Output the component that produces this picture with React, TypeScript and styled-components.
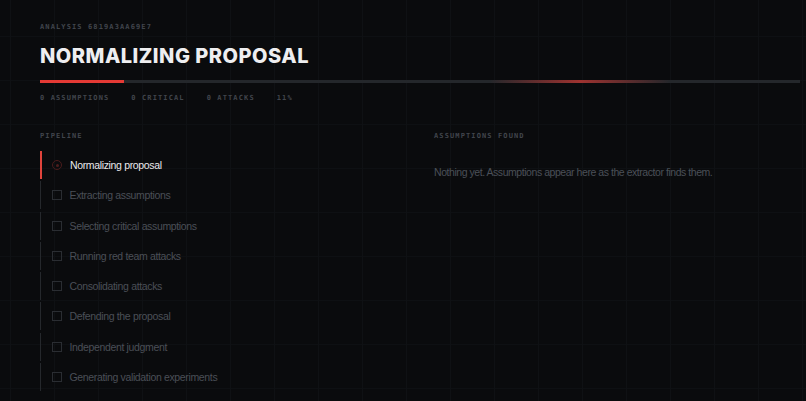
import { FC } from "react";
import styled, { createGlobalStyle } from "styled-components";

const GlobalStyle = createGlobalStyle`
  html, body {
    margin: 0;
    padding: 0;
    background: #0a0b0d;
  }
  body {
    font-family: "Liberation Sans", Arial, sans-serif;
  }
`;

const Page = styled.div`
  min-height: 401px;
  box-sizing: border-box;
  padding: 22px 6px 0 40px;
  background-color: #0a0b0d;
  background-image:
    linear-gradient(to right, #0f1114 1px, transparent 1px),
    linear-gradient(to bottom, #0e1013 1px, transparent 1px);
  background-size: 44px 44px;
  background-position: 10px 36px;
`;

const Mono = styled.div<{ $color?: string }>`
  font-family: "DejaVu Sans Mono", "Liberation Mono", monospace;
  font-size: 7px;
  font-weight: 700;
  line-height: 10px;
  letter-spacing: 1.12px;
  text-transform: uppercase;
  color: ${(p) => p.$color ?? "#41454c"};
`;

const Title = styled.h1`
  margin: 12px 0 0;
  font-family: Inter, "Liberation Sans", sans-serif;
  font-weight: 800;
  font-size: 20px;
  line-height: 24px;
  letter-spacing: 0.5px;
  color: #eeeef0;
`;

const Track = styled.div`
  position: relative;
  margin-top: 12px;
  height: 3px;
  width: 760px;
  background: #24272b;
  overflow: hidden;
`;

const Fill = styled.div`
  height: 100%;
  background: #e53a35;
`;

const Shimmer = styled.div`
  position: absolute;
  top: 0;
  left: 450px;
  width: 180px;
  height: 100%;
  background: linear-gradient(
    to right,
    rgba(200, 55, 50, 0) 0%,
    rgba(200, 55, 50, 0.75) 50%,
    rgba(200, 55, 50, 0) 100%
  );
`;

const Stats = styled.div`
  display: flex;
  gap: 22px;
  margin-top: 10px;
`;

const Columns = styled.div`
  display: grid;
  grid-template-columns: 366px 1fr;
  column-gap: 28px;
  margin-top: 28px;
`;

const Steps = styled.ul`
  list-style: none;
  margin: 10px 0 0;
  padding: 0;
  display: flex;
  flex-direction: column;
  gap: 2.3px;
`;

const Step = styled.li<{ $active?: boolean }>`
  display: flex;
  align-items: center;
  gap: 8px;
  height: 28px;
  padding-left: ${(p) => (p.$active ? "10px" : "10.5px")};
  border-left: ${(p) => (p.$active ? "2px solid #e0443c" : "1.5px solid #25282c")};
  font-size: 10.5px;
  letter-spacing: -0.35px;
  color: ${(p) => (p.$active ? "#e9e9ec" : "#4a4f57")};
`;

const Box = styled.span`
  width: 8px;
  height: 8px;
  border: 1px solid #2a2d32;
  flex: none;
`;

const Ring = styled.span`
  width: 8px;
  height: 8px;
  border: 1px solid #4a1c1c;
  border-radius: 50%;
  display: flex;
  align-items: center;
  justify-content: center;
  flex: none;

  &::after {
    content: "";
    width: 3px;
    height: 3px;
    border-radius: 50%;
    background: #4d1d1d;
  }
`;

const Empty = styled.p`
  margin: 25px 0 0;
  font-size: 10.5px;
  letter-spacing: -0.45px;
  color: #4b5058;
`;

const steps = [
  "Normalizing proposal",
  "Extracting assumptions",
  "Selecting critical assumptions",
  "Running red team attacks",
  "Consolidating attacks",
  "Defending the proposal",
  "Independent judgment",
  "Generating validation experiments",
];

const progress = 11;

const App: FC = () => {
  return (
    <Page>
      <GlobalStyle />
      <Mono>Analysis 6819A3AA69E7</Mono>
      <Title>NORMALIZING PROPOSAL</Title>
      <Track>
        <Fill style={{ width: `${progress}%` }} />
        <Shimmer />
      </Track>
      <Stats>
        <Mono>0 assumptions</Mono>
        <Mono>0 critical</Mono>
        <Mono>0 attacks</Mono>
        <Mono>{progress}%</Mono>
      </Stats>
      <Columns>
        <div>
          <Mono>Pipeline</Mono>
          <Steps>
            {steps.map((s, i) => (
              <Step key={s} $active={i === 0}>
                {i === 0 ? <Ring /> : <Box />}
                {s}
              </Step>
            ))}
          </Steps>
        </div>
        <div>
          <Mono>Assumptions found</Mono>
          <Empty>Nothing yet. Assumptions appear here as the extractor finds them.</Empty>
        </div>
      </Columns>
    </Page>
  );
};

export default App;
